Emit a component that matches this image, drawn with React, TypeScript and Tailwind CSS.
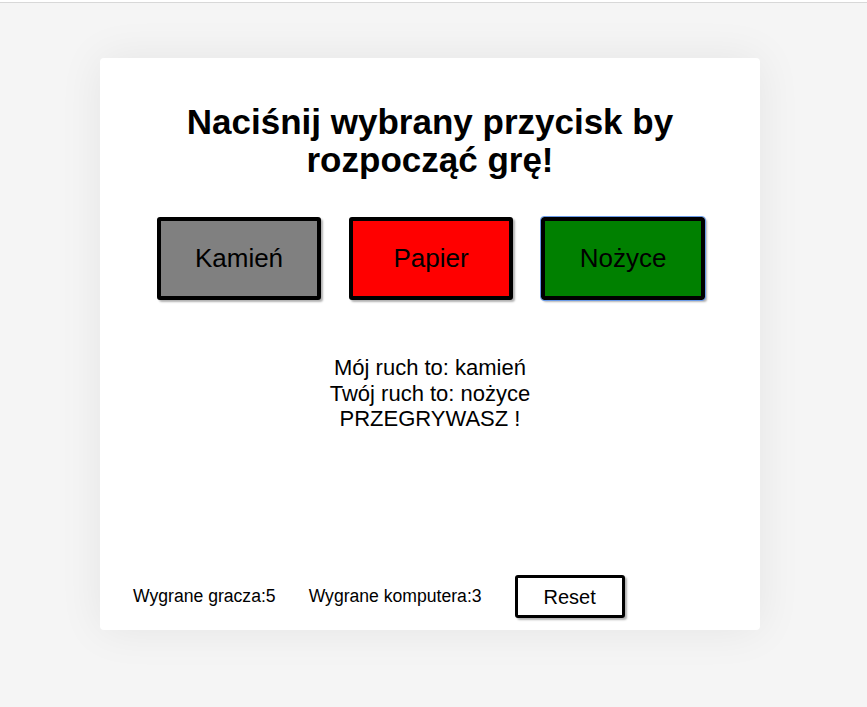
import { useState } from "react"

const moves = [
  { name: "Kamień", bg: "bg-[#808080]" },
  { name: "Papier", bg: "bg-[#ff0000]" },
  { name: "Nożyce", bg: "bg-[#008000]" },
]

const App = () => {
  const [playerWins, setPlayerWins] = useState(5)
  const [computerWins, setComputerWins] = useState(3)

  return (
    <div className="min-h-[707px] bg-[#f5f5f5] font-['Liberation_Sans',Arial,sans-serif] text-black">
      <div className="h-[3px] bg-white border-b border-[#d8d8d8]"></div>

      <div className="pt-[55px] pl-[100px]">
        <div className="w-[660px] h-[572px] bg-white rounded-[4px] shadow-[0_0_45px_rgba(0,0,0,0.07)] flex flex-col">
          <h1 className="mt-[45px] text-center text-[35px] leading-[38px] font-bold">
            Naciśnij wybrany przycisk by
            <br />
            rozpocząć grę!
          </h1>

          <div className="mt-[38px] pl-[2px] flex justify-center gap-[28px]">
            {moves.map((move, i) => (
              <button
                key={move.name}
                className={`w-[164px] h-[83px] ${move.bg} border-[4px] border-black rounded-[3px] shadow-[2px_2px_2px_rgba(0,0,0,0.3)] text-[26px] text-black ${
                  i === 2 ? "outline outline-1 outline-[#6b9be8]" : ""
                }`}
              >
                {move.name}
              </button>
            ))}
          </div>

          <div className="mt-[55px] text-center text-[22px] leading-[25.5px]">
            <div>Mój ruch to: kamień</div>
            <div>Twój ruch to: nożyce</div>
            <div>PRZEGRYWASZ !</div>
          </div>

          <div className="mt-auto mb-[12px] ml-[33px] flex items-center gap-[33px] text-[17.6px]">
            <span>Wygrane gracza:{playerWins}</span>
            <span>Wygrane komputera:{computerWins}</span>
            <button
              onClick={() => {
                setPlayerWins(0)
                setComputerWins(0)
              }}
              className="w-[110px] h-[43px] bg-white border-[3px] border-black rounded-[3px] shadow-[2px_2px_2px_rgba(0,0,0,0.3)] text-[20px]"
            >
              Reset
            </button>
          </div>
        </div>
      </div>
    </div>
  )
}

export default App
